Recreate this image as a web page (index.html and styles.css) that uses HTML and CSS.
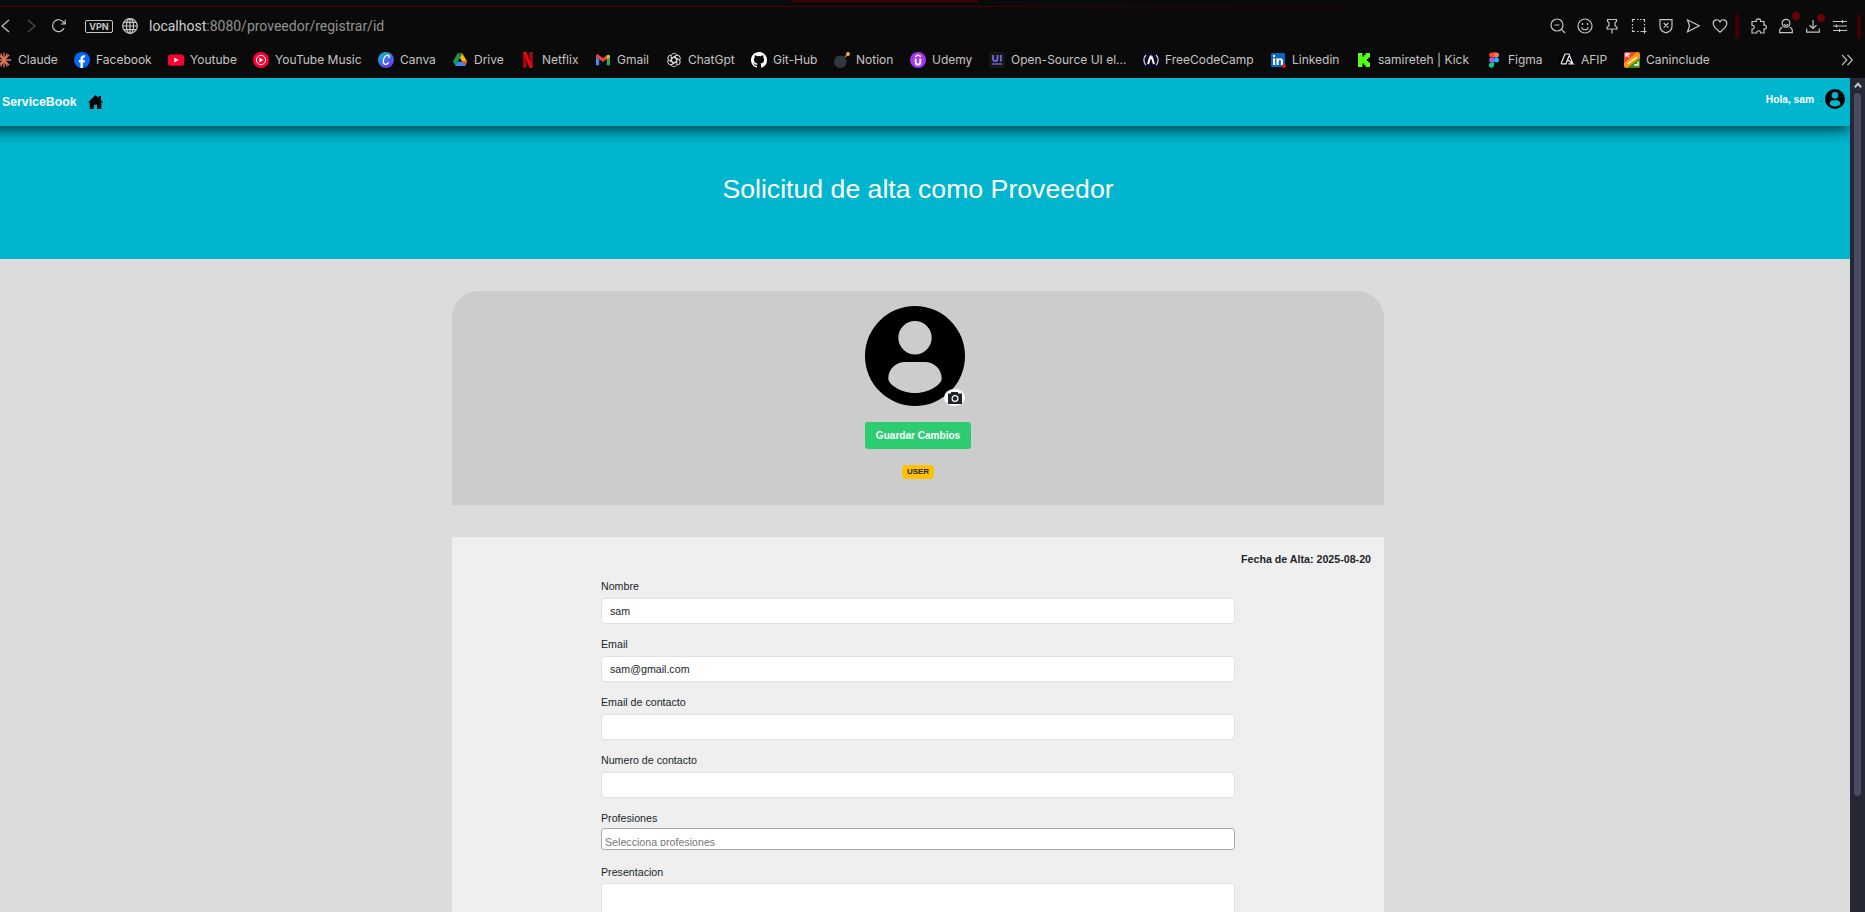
FILE: index.html
```html
<!DOCTYPE html>
<html lang="es">
<head>
<meta charset="utf-8">
<title>ServiceBook</title>
<link rel="stylesheet" href="styles.css">
</head>
<body>
<header class="chrome">
  <div class="tab-edge"></div>
  <div class="address-row">
    <svg class="i-back" viewBox="0 0 10 14"><path d="M9 1 2 7l7 6"/></svg>
    <svg class="i-forward" viewBox="0 0 10 14"><path d="m1 1 7 6-7 6"/></svg>
    <svg class="i-reload" viewBox="0 0 14 14"><path d="M12 9.3A6 6 0 1 1 11.6 3.4L13 5M13.2.8V5H9"/></svg>
    <span class="vpn">VPN</span>
    <svg class="i-globe" viewBox="0 0 16 16"><circle cx="8" cy="8" r="7.3"/><ellipse cx="8" cy="8" rx="3.6" ry="7.3"/><path d="M8 .7v14.6M.7 8h14.6M1.8 4.3h12.4M1.8 11.7h12.4"/></svg>
    <span class="url"><b>localhost</b>:8080/proveedor/registrar/id</span>
    <div class="tools">
      <svg viewBox="0 0 16 16"><circle cx="7" cy="7" r="6"/><path d="M4.5 7h5M11.4 11.4 15 15"/></svg>
      <svg viewBox="0 0 16 16"><circle cx="8" cy="8" r="7"/><path d="M4.7 9.2c.4 3.4 6.200 3.400 6.600 0M5.500 5v2M10.500 5v2"/></svg>
      <svg viewBox="0 0 16 16"><path d="M3.500 1.500h9v2l-1.500 1v3l2 2v1.500H3V9.500l2-2v-3l-1.500-1zM8 11v4.500"/></svg>
      <svg viewBox="0 0 16 16"><path d="M1.500 4V1.500H4M6 1.500h1.500M9 1.500h1.500M12 1.500h1.500V4M13.500 6v1.500M1.500 6v1.500M1.500 9v1.500M1.500 12v1.500H4M6 13.500h1.500M13.500 9v6.500M9.500 13.500h6"/></svg>
      <svg viewBox="0 0 16 16"><path d="M2 1.700h12v6.500c0 3.500-2.500 5.600-6 6.600-3.500-1-6-3.100-6-6.600zM5.700 5l4.600 4.600M10.300 5 5.700 9.600"/></svg>
      <svg viewBox="0 0 16 16"><path d="M2.500 2 14.300 7.800 2.500 13.800 4.500 7.800z"/></svg>
      <svg viewBox="0 0 16 16"><path d="M8 14.200C5.200 11.800 1.200 9 1.200 5.400c0-4.200 5.300-4.800 6.800-1.500 1.500-3.300 6.800-2.700 6.800 1.500C14.800 9 10.800 11.800 8 14.200z"/></svg>
    </div>
    <i class="bar"></i>
    <div class="tools tools-end">
      <svg viewBox="0 0 16 16"><path d="M1 3.500h4.200c-.8-3.500 5.200-3.500 4.400 0H13v3.800c3.300-.8 3.300 4.400 0 3.600V15H9.500c.6-3-4.400-3-3.800 0H1v-4c3 .6 3-4.200 0-3.600z"/></svg>
      <span class="dotted"><svg viewBox="0 0 16 16"><circle cx="8" cy="5.300" r="3.900"/><path d="M5.800 6c.8 1.800 3.600 1.800 4.400 0M4.500 9.200C2.500 9.800 1.700 11 1.700 12.500v2.200h12.600v-2.200c0-1.500-.8-2.700-2.800-3.300"/></svg><i class="dot"></i></span>
      <span class="dotted low"><svg viewBox="0 0 16 16"><path d="M8 2v8.300M4.500 7.200 8 10.500l3.500-3.300M1.700 10.500v3.700h12.600v-3.700"/></svg><i class="dot"></i></span>
      <svg viewBox="0 0 16 16"><path d="M1 3.500h14M1 8h14M1 12.500h14M10.500 2v3M4.500 6.500v3M7.500 11v3"/></svg>
    </div>
    <i class="bar"></i>
  </div>
  <nav class="bookmarks">
    <a><svg viewBox="0 0 16 16"><path stroke="#d97757" stroke-width="1.300" d="M8 .8v14.400M.8 8h14.400M2.800 2.800l10.400 10.400M13.200 2.800 2.800 13.200M4.600 1.600l6.800 12.800M11.400 1.600 4.600 14.400"/></svg>Claude</a>
    <a><svg viewBox="0 0 16 16"><circle cx="8" cy="8" r="8" fill="#0866ff"/><path fill="#fff" d="M6.500 16v-5.400H4.800V8.100h1.700V6.900c0-2.800 1.400-4 4.400-3.700v2.300c-1.500-.1-2 .1-2 1.300v1.300h2l-.4 2.500H8.900V16z"/></svg>Facebook</a>
    <a><svg viewBox="0 0 16 16"><rect y="2.500" width="16" height="11.300" rx="2.500" fill="#ff0033"/><path fill="#fff" d="m6.300 5.700 4.400 2.400-4.400 2.400z"/></svg>Youtube</a>
    <a><svg viewBox="0 0 16 16"><circle cx="8" cy="8" r="8" fill="#ff0033"/><circle cx="8" cy="8" r="4.600" stroke="#fff"/><path fill="#fff" d="m6.300 5.600 4.200 2.400-4.200 2.400z"/></svg>YouTube Music</a>
    <a><svg viewBox="0 0 16 16"><defs><linearGradient id="cv" x1=".1" y1="0" x2=".8" y2="1"><stop stop-color="#00c4cc"/><stop offset=".55" stop-color="#4569e8"/><stop offset="1" stop-color="#7d2ae8"/></linearGradient></defs><circle cx="8" cy="8" r="8" fill="url(#cv)"/><path stroke="#fff" stroke-width="1.300" d="M10.200 6c1.700-.8 1.200-3-.8-2.800-2.700.3-4.700 4.800-4 7.300.7 2.700 3.800 2.400 5.200-.1"/></svg>Canva</a>
    <a><svg viewBox="0 0 16 16"><path fill="#0f9d58" d="M5.400 1.500 1 9.500l2.300 4L8 5.700z"/><path fill="#ffba00" d="M5.400 1.500h5l4.800 8.300h-5z"/><path fill="#4285f4" d="M5.500 9.800h9.700l-2 4.200H3.200z"/><path fill="#188038" d="M5.400 1.500h5L8 5.700z"/><path fill="#ea4335" d="M10.200 9.800h5l-1.500 3z"/></svg>Drive</a>
    <a><svg viewBox="0 0 16 16"><path fill="#b1060f" d="M3.200 0h3.200v16l-3.200-.2zM9.500 0h3.200v16l-3.200-.2z"/><path fill="#e50914" d="M3.200 0h3.300l6.200 16-3.300-.5z"/></svg>Netflix</a>
    <a><svg viewBox="0 0 16 16"><path fill="#4285f4" d="M1 4.500 4.200 7v6.300H1z"/><path fill="#34a853" d="M11.800 7 15 4.500v8.800h-3.200z"/><path fill="#ea4335" d="M1 3.500c.5-1.400 1.700-1.400 2.700-.6L8 6.100l4.300-3.200v3.700L8 10 1 4.800z"/><path fill="#fbbc04" d="M11.800 3.300c1.700-1.300 3.200-.5 3.200 1.300v.5L11.800 7.400z"/></svg>Gmail</a>
    <a><svg viewBox="0 0 16 16"><g stroke="#ddd" stroke-width="1"><path id="petal" d="M5.200 9.700V4.400c0-3.200 4.100-4.200 5.700-1.500M6.200 6.400l3.300-1.900"/><use href="#petal" transform="rotate(60 8 8)"/><use href="#petal" transform="rotate(120 8 8)"/><use href="#petal" transform="rotate(180 8 8)"/><use href="#petal" transform="rotate(240 8 8)"/><use href="#petal" transform="rotate(300 8 8)"/></g></svg>ChatGpt</a>
    <a><svg viewBox="0 0 16 16"><path fill="#fff" d="M8 0C3.580 0 0 3.580 0 8c0 3.540 2.290 6.530 5.470 7.590.4.070.55-.17.55-.38v-1.340c-2.230.48-2.690-1.070-2.690-1.070-.36-.92-.89-1.170-.89-1.170-.73-.5.050-.49.050-.49.8.060 1.230.83 1.230.83.72 1.210 1.870.87 2.330.66.070-.52.280-.87.510-1.070-1.780-.2-3.640-.89-3.640-3.950 0-.87.310-1.590.82-2.150-.08-.2-.36-1.020.08-2.120 0 0 .67-.21 2.200.82a7.700 7.700 0 0 1 4 0c1.530-1.040 2.200-.82 2.200-.82.440 1.100.160 1.920.080 2.120.510.560.820 1.270.820 2.150 0 3.070-1.870 3.750-3.650 3.950.290.250.540.730.540 1.480v2.190c0 .21.150.46.550.38A8 8 0 0 0 16 8c0-4.420-3.580-8-8-8z"/></svg>Git-Hub</a>
    <a><svg viewBox="0 0 16 16"><circle cx="6.300" cy="9.700" r="6.300" fill="#31373d"/><path stroke="#31373d" stroke-width="4" d="m9 7 1.500-1.500"/><path stroke="#b8854d" stroke-width="1.300" d="m11 5 2.500-2.500"/><circle cx="14" cy="2" r="1.900" fill="#ffac33"/></svg>Notion</a>
    <a><svg viewBox="0 0 16 16"><circle cx="8" cy="8" r="8" fill="#a435f0"/><path stroke="#fff" stroke-width="1.900" d="M5.700 6.500v3.700c0 3.200 4.600 3.200 4.600 0V6.500"/><path stroke="#fff" stroke-width="1.500" d="M5 4.700 8 3l3 1.700"/></svg>Udemy</a>
    <a><svg viewBox="0 0 16 16"><rect width="16" height="16" rx="2" fill="#171719"/><path stroke="#7568e8" stroke-width="1.800" d="M4 3v3.500c0 3.600 4.500 3.600 4.500 0V3M11.800 3v6.500"/><path stroke="#7568e8" stroke-width="1.300" d="M3 12h10"/></svg>Open-Source UI el...</a>
    <a><svg viewBox="0 0 16 16"><rect width="16" height="16" fill="#0a0a23"/><path stroke="#ddd" stroke-width="1.200" d="M3 3C.2 5.700.2 10.300 3 13M13 3c2.800 2.700 2.800 7.300 0 10"/><path stroke="#fff" stroke-width="2" d="M5 12c.8-2.200 1.300-4.700 2.600-7.600h.8c1.300 2.900 1.800 5.400 2.600 7.600"/></svg>FreeCodeCamp</a>
    <a><svg viewBox="0 0 16 16"><rect x="1" y="1" width="14" height="14" rx="1" fill="#0a66c2"/><path fill="#fff" d="M3 6.300h2.100V13H3zM3 3h2.100v2H3zM6.500 6.300h2v.9c1.300-1.700 4.500-1.400 4.500 1.600V13h-2.100V9.400c0-1.900-2.300-1.800-2.300 0V13H6.500z"/><circle cx="14" cy="14" r="2" fill="#e8131b"/></svg>Linkedin</a>
    <a><svg viewBox="0 0 16 16"><rect width="16" height="16" fill="#000"/><path fill="#53fc18" d="M2 1h4.500v3.500H8V3h1.500V1H14v4.500h-1.500V7H11v2h1.500v1.500H14V15H9.500v-2H8v-1.500H6.500V15H2z"/></svg>samireteh | Kick</a>
    <a><svg viewBox="0 0 16 16"><path fill="#f24e1e" d="M8 .5H5.600a2.500 2.500 0 0 0 0 5H8z"/><path fill="#ff7262" d="M8 .5h2.500a2.500 2.500 0 0 1 0 5H8z"/><path fill="#a259ff" d="M8 5.500H5.600a2.500 2.500 0 0 0 0 5H8z"/><circle cx="10.500" cy="8" r="2.500" fill="#1abcfe"/><path fill="#0acf83" d="M8 10.500H5.600A2.600 2.600 0 1 0 8 13z"/></svg>Figma</a>
    <a><svg viewBox="0 0 16 16"><circle cx="8" cy="8" r="8" fill="#000"/><path stroke="#eee" stroke-width="1.200" d="M2 11.800 6 2h4l3.800 9.800M2 11.800h5L10 4M9 8l5 3.800H9.500"/></svg>AFIP</a>
    <a><svg viewBox="0 0 16 16"><rect width="16" height="16" rx="2.500" fill="#ff9800"/><path fill="#f44336" d="M2 0h11L0 11V2z"/><path fill="#388e1c" d="M16 6v8l-2 2H3z"/><path stroke="#fff" stroke-width="1.300" d="M3.500 12 13 5M2 5V2h4M2 2l3 3M10 13h4V9.500"/></svg>Caninclude</a>
    <svg class="more" viewBox="0 0 12 12"><path d="m1 .8 4.800 5.200L1 11.200M6.500.8l4.800 5.200-4.800 5.200"/></svg>
  </nav>
</header>
<div class="viewport">
  <main class="page">
    <nav class="site-nav">
      <span class="brand">ServiceBook</span>
      <svg class="home" viewBox="0 0 16 16"><path d="M8 0 0 8.100h1.800V15h4.400v-4.700h3.500V15h4.500V8.100H16l-2.200-2.400V1h-2.500v2.300z"/></svg>
      <span class="hello">Hola, sam</span>
      <i class="caret"></i>
      <svg class="mini-avatar" viewBox="2 2 20 20"><path d="M12 2a10 10 0 1 0 0 20 10 10 0 0 0 0-20zm0 3a3.350 3.350 0 1 1 0 6.700A3.350 3.350 0 0 1 12 5zm0 14.400c-2.100 0-5.300-1-5.300-3 0-1.900 1.500-3.200 3.300-3.200h4c1.800 0 3.300 1.300 3.300 3.200 0 2-3.200 3-5.300 3z"/></svg>
    </nav>
    <section class="hero"><h1>Solicitud de alta como Proveedor</h1></section>
    <section class="profile">
      <div class="avatar">
        <svg viewBox="0 0 100 100"><path d="M50 0a50 50 0 1 0 0 100A50 50 0 0 0 50 0zm0 15a16.700 16.700 0 1 1 0 33.400A16.700 16.700 0 0 1 50 15zm0 72C37 87 23.300 79 23.300 72.500 23.300 63 31 56 40 56h20c9 0 16.700 7 16.700 16.500C76.700 79 63 87 50 87z"/></svg>
        <span class="camera"><svg viewBox="0 0 14 12"><path fill="#212529" d="M0 1.500h3V0h7v1.500h4V12H0z"/><circle cx="7" cy="6.500" r="2.900" fill="none" stroke="#fff" stroke-width="1.200"/></svg></span>
      </div>
      <button class="save">Guardar Cambios</button>
      <span class="role">USER</span>
    </section>
    <section class="form-card">
      <p class="date">Fecha de Alta: 2025-08-20</p>
      <form class="fields">
        <label>Nombre</label><div class="input">sam</div>
        <label>Email</label><div class="input">sam@gmail.com</div>
        <label>Email de contacto</label><div class="input"></div>
        <label>Numero de contacto</label><div class="input"></div>
        <label>Profesiones</label><div class="picker"><span>Selecciona profesiones</span></div>
        <label>Presentacion</label><div class="input area"></div>
      </form>
    </section>
  </main>
  <aside class="scrollbar">
    <svg viewBox="0 0 8 6"><path d="M.8 5.200 4 1.800l3.200 3.400" fill="none" stroke="#c8c8c8" stroke-width="2"/></svg>
    <i class="thumb"></i>
  </aside>
</div>
</body>
</html>
```
FILE: styles.css
```css
* { box-sizing: border-box; }
body { margin: 0; width: 1865px; height: 912px; overflow: hidden; font-family: "Liberation Sans", Arial, sans-serif; font-size: 10.67px; color: #212529; }
svg { display: block; flex: none; overflow: visible; }

.chrome { height: 78px; background: #0a0a0a; font-family: Inter, sans-serif; color: #c4c4c4; }
.chrome svg { fill: none; }
.tab-edge { height: 7px; border-bottom: 1px solid; border-image: linear-gradient(90deg, #490006 50%, #0a0a0a 78%) 1; background: linear-gradient(#400004, #400004) 791px 0 / 187px 2px no-repeat; }
.address-row { height: 38px; margin-bottom: 1px; display: flex; align-items: center; }
.address-row svg { stroke: #c4c4c4; stroke-width: 1.200; }
.i-back { width: 10px; height: 14px; }
.address-row .i-forward { width: 10px; height: 14px; margin-left: 17px; stroke: #4d4d4d; }
.i-reload { width: 14px; height: 14px; margin-left: 15px; }
.vpn { width: 28px; height: 13px; margin-left: 19px; border: 1px solid #c4c4c4; border-radius: 2px; font-size: 9px; font-weight: 700; line-height: 11px; text-align: center; }
.i-globe { width: 16px; height: 16px; margin-left: 9px; }
.url { width: 1401px; margin-left: 11px; font-family: Roboto, sans-serif; font-size: 14px; line-height: 18px; color: #929292; white-space: nowrap; }
.url b { font-weight: 400; color: #cecece; }
.tools { width: 183px; display: grid; grid-template-columns: repeat(7, 27px); justify-items: start; }
.tools svg { width: 16px; height: 16px; }
.tools-end { width: 110px; margin-left: 12px; grid-template-columns: 27px repeat(3, 27px); }
.bar { width: 4px; height: 25px; border-radius: 2px; background: #400004; }
.tools + .bar { margin-left: 2px; }
.tools-end + .bar { margin-left: -4px; }
.dotted { position: relative; }
.dot { position: absolute; left: 14px; top: -6px; width: 8px; height: 8px; border-radius: 50%; background: #6d0000; }
.low .dot { left: 12px; top: -4px; }
.bookmarks { height: 27px; margin-left: -4px; display: grid; grid-template-columns: 78px 94px 85px 125px 74px 68px 75px 71px 85px 83px 76px 79px 154px 127px 86px 130px 73px 65px 217px 12px; align-items: center; font-size: 12px; white-space: nowrap; }
.bookmarks a { display: flex; align-items: center; gap: 6px; line-height: 16px; }
.bookmarks a svg { width: 16px; height: 16px; }
.bookmarks .more { width: 12px; height: 12px; stroke: #c4c4c4; stroke-width: 1.200; }

.viewport { display: flex; height: 834px; }
.page { width: 1850px; background: #dcdcdc; overflow: hidden; }
.site-nav { position: relative; height: 48px; margin-left: -20px; padding: 0 5px 0 22px; display: flex; align-items: center; background: #00b6cf; box-shadow: 0 4px 14px rgba(0, 0, 0, .68); color: #fff; font-weight: 700; }
.brand { width: 86px; margin-bottom: 1px; font-size: 12.300px; }
.home { width: 15px; height: 15px; margin-top: 1px; }
.hello { margin: 0 6px 5px auto; font-size: 10.200px; }
.caret { width: 2px; height: 1px; margin: 0 3px 2px 0; background: #08707c; }
.mini-avatar { width: 20px; height: 20px; margin-bottom: 6px; }
.hero { height: 133px; padding-top: 47px; background: #00b6cf; color: #fff; text-align: center; }
.hero h1 { margin: 0; padding-right: 14px; font-size: 26.670px; font-weight: 400; line-height: 33px; }
.profile { width: 932px; height: 214px; margin: 32px 0 32px 452px; padding-top: 15px; border-radius: 27px 27px 0 0; background: #ccc; display: flex; flex-direction: column; align-items: center; }
.avatar { position: relative; width: 106px; height: 116px; }
.avatar > svg { width: 100px; height: 100px; }
.camera { position: absolute; left: 79px; top: 83px; width: 21px; height: 17px; border-radius: 50%; background: #fff; display: grid; place-items: center; }
.camera svg { width: 14px; height: 12px; }
.save { width: 106px; height: 27px; padding: 0; border: 0; border-radius: 3px; background: #2ecc71; color: #fff; font: 700 10.050px/28px "Liberation Sans", Arial, sans-serif; }
.role { width: 32px; height: 14px; margin-top: 16px; border-radius: 4px; background: #ffc107; font-size: 8px; font-weight: 700; line-height: 13px; text-align: center; }
.form-card { width: 932px; height: 400px; margin-left: 452px; padding: 14px 13px 0 149px; background: #efefef; }
.date { margin: 0; text-align: right; font-size: 10.670px; font-weight: 700; line-height: 16px; }
.fields { width: 634px; padding-top: 11px; }
.fields label { display: block; height: 20px; line-height: 16px; }
.input { height: 26px; margin-bottom: 12px; padding-left: 8px; border: 1px solid #dee2e6; border-radius: 4px; background: #fff; line-height: 24px; }
.picker { height: 22px; margin: -2px 0 14px; padding: 5px 3px 0; border: 1px solid #aaa; border-radius: 3px; background: #fff; color: #777; }
.picker span { display: block; height: 12px; line-height: 16px; overflow: hidden; }
.area { height: 60px; margin-top: -1px; }
.scrollbar { width: 15px; padding-top: 4px; background: #252936; display: flex; flex-direction: column; align-items: center; gap: 5px; }
.scrollbar svg { width: 8px; height: 6px; }
.thumb { width: 7px; height: 703px; border-radius: 4px; background: #494c63; }
```
